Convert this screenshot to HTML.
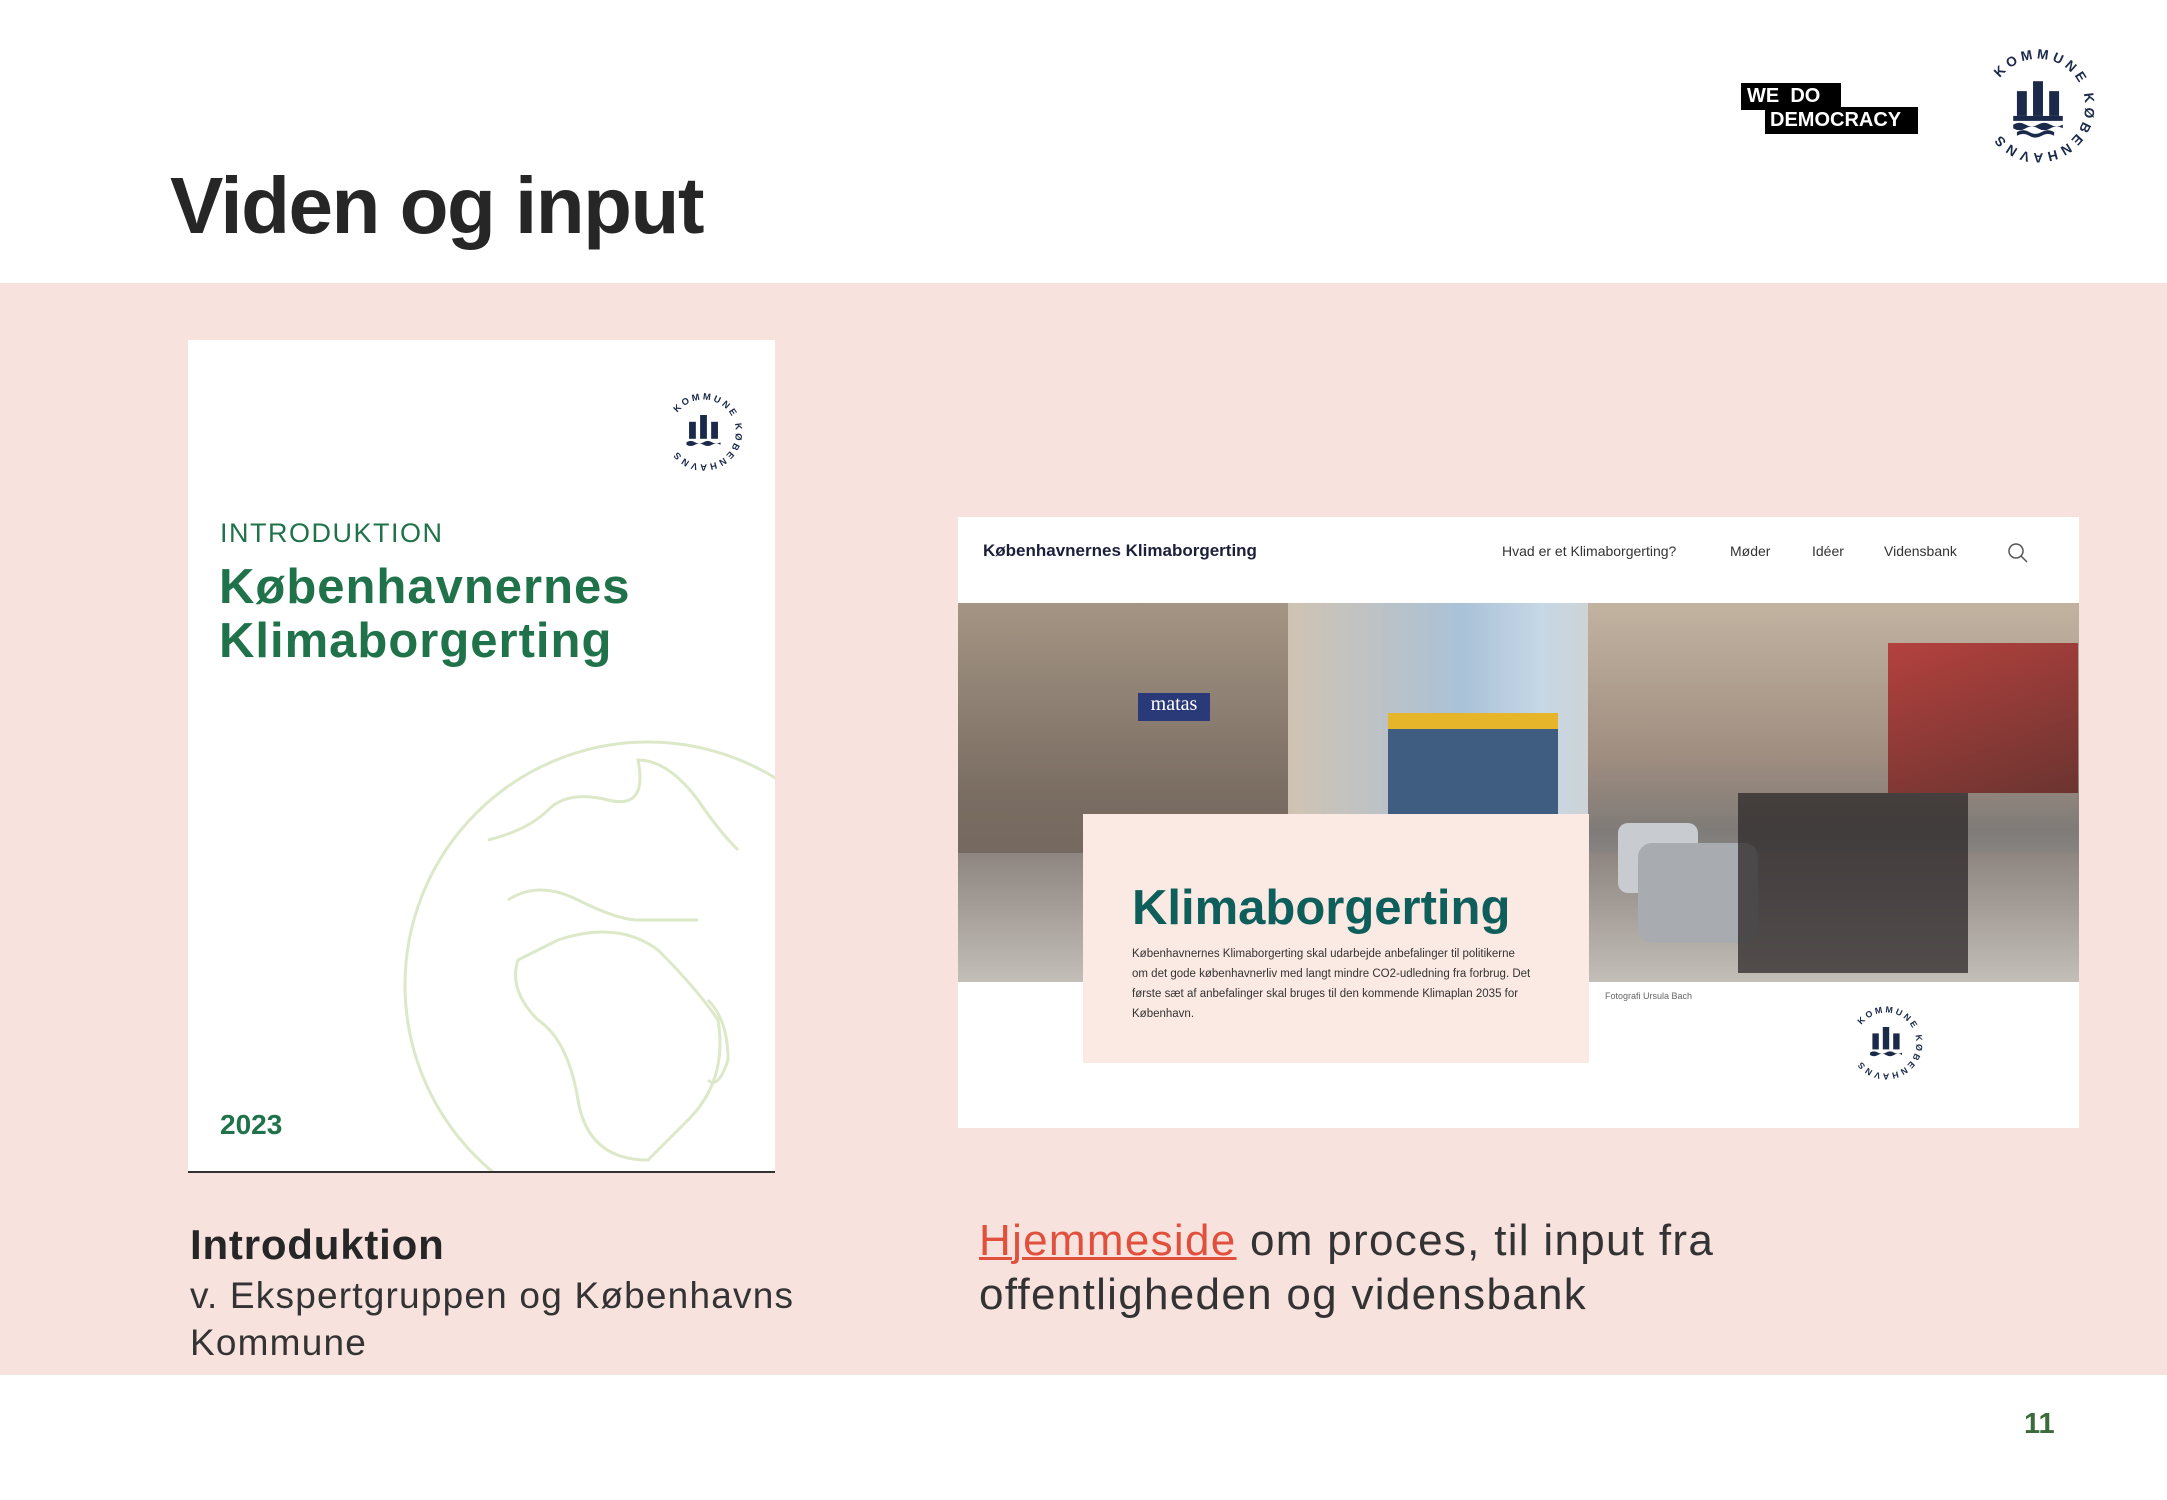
<!DOCTYPE html>
<html><head><meta charset="utf-8"><style>
*{margin:0;padding:0;box-sizing:border-box}
body{width:2167px;height:1500px;background:#fff;position:relative;overflow:hidden;font-family:"Liberation Sans",sans-serif;color:#2b2b2b}
.a{position:absolute}
h1{position:absolute;left:170px;top:166px;font-size:80px;font-weight:bold;color:#262626;letter-spacing:-1.5px;line-height:1}
.band{position:absolute;left:0;top:283px;width:2167px;height:1092px;background:#f7e2de}
.card{position:absolute;left:188px;top:340px;width:587px;height:833px;background:#fff;border-bottom:2px solid #333;overflow:hidden}
.g{color:#1f7249;font-weight:bold}
.shot{position:absolute;left:958px;top:517px;width:1121px;height:611px;background:#fff;overflow:hidden}
.nav{font-size:14px;color:#333;top:26px}
.photo{position:absolute;left:0;top:86px;width:1121px;height:379px;overflow:hidden;background:linear-gradient(90deg,#8c7d70 0%,#b7a898 15%,#cfc3b4 30%,#a9c2d8 45%,#c6d7e6 52%,#d8cfc2 62%,#bcae9e 78%,#8e7c70 100%)}
.over{position:absolute;left:125px;top:297px;width:506px;height:249px;background:#fbe9e3}
</style></head><body>
<h1>Viden og input</h1>
<div class="a" style="left:1741px;top:83px;width:100px;height:27px;background:#000;color:#fff;font-weight:bold;font-size:20px;line-height:27px;padding-left:6px">WE&nbsp;&nbsp;DO</div>
<div class="a" style="left:1765px;top:107px;width:153px;height:27px;background:#000;color:#fff;font-weight:bold;font-size:20px;line-height:26px;padding-left:5px">DEMOCRACY</div>
<svg class="a" style="left:1976px;top:44px" width="124" height="124" viewBox="0 0 100 100"><defs><path id="cp" d="M50,50 m-38,0 a38,38 0 1,1 76,0 a38,38 0 1,1 -76,0"/></defs><text font-size="11" font-weight="bold" fill="#1b2a4a" letter-spacing="3"><textPath href="#cp" startOffset="10%">KOMMUNE KØBENHAVNS</textPath></text><g fill="#1b2a4a"><rect x="33" y="38" width="8" height="20"/><rect x="46" y="30" width="8" height="28"/><rect x="59" y="38" width="8" height="20"/><rect x="30" y="58" width="40" height="4"/><path d="M30 65q5-3 10 0t10 0 10 0 10 0v3q-5-3-10 0t-10 0-10 0-10 0z"/><path d="M33 71q5-3 10 0t10 0 10 0v3q-5-3-10 0t-10 0-10 0z"/></g></svg>
<div class="band"></div>
<div class="card">
<svg class="a" style="left:473px;top:47px" width="85" height="90" viewBox="0 0 100 100"><defs><path id="cp2" d="M50,50 m-38,0 a38,38 0 1,1 76,0 a38,38 0 1,1 -76,0"/></defs><text font-size="11" font-weight="bold" fill="#1b2a4a" letter-spacing="3"><textPath href="#cp2" startOffset="10%">KOMMUNE KØBENHAVNS</textPath></text><g fill="#1b2a4a"><rect x="33" y="38" width="8" height="20"/><rect x="46" y="30" width="8" height="28"/><rect x="59" y="38" width="8" height="20"/><path d="M30 62q5-3 10 0t10 0 10 0 10 0v3q-5-3-10 0t-10 0-10 0-10 0z"/></g></svg>
<div class="a" style="left:32px;top:178px;font-size:27px;color:#1f7249;letter-spacing:1.5px">INTRODUKTION</div>
<div class="a g" style="left:31px;top:220px;font-size:49px;line-height:54px;letter-spacing:1px">Københavnernes<br>Klimaborgerting</div>
<div class="a g" style="left:32px;top:769px;font-size:28px">2023</div>
<svg class="a" style="left:0;top:0" width="587" height="833"><g fill="none" stroke="#dce8c8" stroke-width="3"><circle cx="460" cy="645" r="243"/><path d="M300 500q40-10 60-30t60-10 30-40q30 0 60 40q20 30 40 50M320 560q30-20 70 0t60 20 60 0M370 600q60-20 100 10q40 40 60 70q10 60-30 100q-40 40-40 40q-60 0-70-60q-10-60-40-80q-30-30-20-60zM520 660q20 20 20 60q-10 30-20 20"/></g></svg>
</div>
<div class="shot">
<div class="a" style="left:25px;top:24px;font-size:17px;font-weight:bold;color:#1b1f3a">Københavnernes Klimaborgerting</div>
<div class="a nav" style="left:544px">Hvad er et Klimaborgerting?</div>
<div class="a nav" style="left:772px">Møder</div>
<div class="a nav" style="left:854px">Idéer</div>
<div class="a nav" style="left:926px">Vidensbank</div>
<svg class="a" style="left:1048px;top:24px" width="24" height="24"><circle cx="10" cy="10" r="7" fill="none" stroke="#555" stroke-width="1.5"/><path d="M15 15l6 6" stroke="#555" stroke-width="1.5"/></svg>
<div class="photo">
<div class="a" style="left:0;top:0;width:330px;height:379px;background:linear-gradient(180deg,#a49584,#7a6d62 50%,#6a625c)"></div>
<div class="a" style="left:180px;top:90px;width:72px;height:28px;background:#2a3a78;color:#fff;font-family:'Liberation Serif';font-size:20px;text-align:center">matas</div>
<div class="a" style="left:430px;top:110px;width:170px;height:130px;background:#3f5d80;border-top:16px solid #e7b52a"></div>
<div class="a" style="left:630px;top:0;width:491px;height:379px;background:linear-gradient(180deg,#c2b3a1,#a08e80 40%,#7f7b78 60%,#b6b3ae)"></div>
<div class="a" style="left:930px;top:40px;width:190px;height:150px;background:linear-gradient(160deg,#b4413e,#6b3430)"></div>
<div class="a" style="left:0;top:250px;width:1121px;height:129px;background:linear-gradient(180deg,#8e8580,#c3beb8)"></div>
<div class="a" style="left:660px;top:220px;width:80px;height:70px;background:#c8ccd0;border-radius:10px"></div>
<div class="a" style="left:680px;top:240px;width:120px;height:100px;background:#a8acb0;border-radius:14px"></div>
<div class="a" style="left:780px;top:190px;width:230px;height:180px;background:#2c2828;opacity:.75"></div>
</div>
<div class="over">
<div class="a" style="left:49px;top:66px;font-size:49px;font-weight:bold;color:#0e5f5b">Klimaborgerting</div>
<div class="a" style="left:49px;top:130px;font-size:11.5px;line-height:20px;color:#333;width:400px">Københavnernes Klimaborgerting skal udarbejde anbefalinger til politikerne om det gode københavnerliv med langt mindre CO2-udledning fra forbrug. Det første sæt af anbefalinger skal bruges til den kommende Klimaplan 2035 for København.</div>
</div>
<div class="a" style="left:647px;top:474px;font-size:9px;color:#666">Fotografi Ursula Bach</div>
<svg class="a" style="left:888px;top:485px" width="80" height="82" viewBox="0 0 100 100"><defs><path id="cp3" d="M50,50 m-38,0 a38,38 0 1,1 76,0 a38,38 0 1,1 -76,0"/></defs><text font-size="11" font-weight="bold" fill="#1b2a4a" letter-spacing="3"><textPath href="#cp3" startOffset="10%">KOMMUNE KØBENHAVNS</textPath></text><g fill="#1b2a4a"><rect x="33" y="38" width="8" height="20"/><rect x="46" y="30" width="8" height="28"/><rect x="59" y="38" width="8" height="20"/><path d="M30 62q5-3 10 0t10 0 10 0 10 0v3q-5-3-10 0t-10 0-10 0-10 0z"/></g></svg>
</div>
<div class="a" style="left:190px;top:1221px;font-size:42px;font-weight:bold;color:#262626;letter-spacing:0.8px">Introduktion</div>
<div class="a" style="left:190px;top:1272px;font-size:37px;line-height:47px;color:#333;letter-spacing:1.2px">v. Ekspertgruppen og Københavns<br>Kommune</div>
<div class="a" style="left:979px;top:1214px;font-size:44px;line-height:54px;color:#333;width:900px;letter-spacing:1.3px"><span style="color:#e0503c;text-decoration:underline;text-decoration-thickness:3px">Hjemmeside</span> om proces, til input fra<br>offentligheden og vidensbank</div>
<div class="a" style="left:2024px;top:1408px;font-size:29px;font-weight:bold;color:#3b6b3a">11</div>
</body></html>
